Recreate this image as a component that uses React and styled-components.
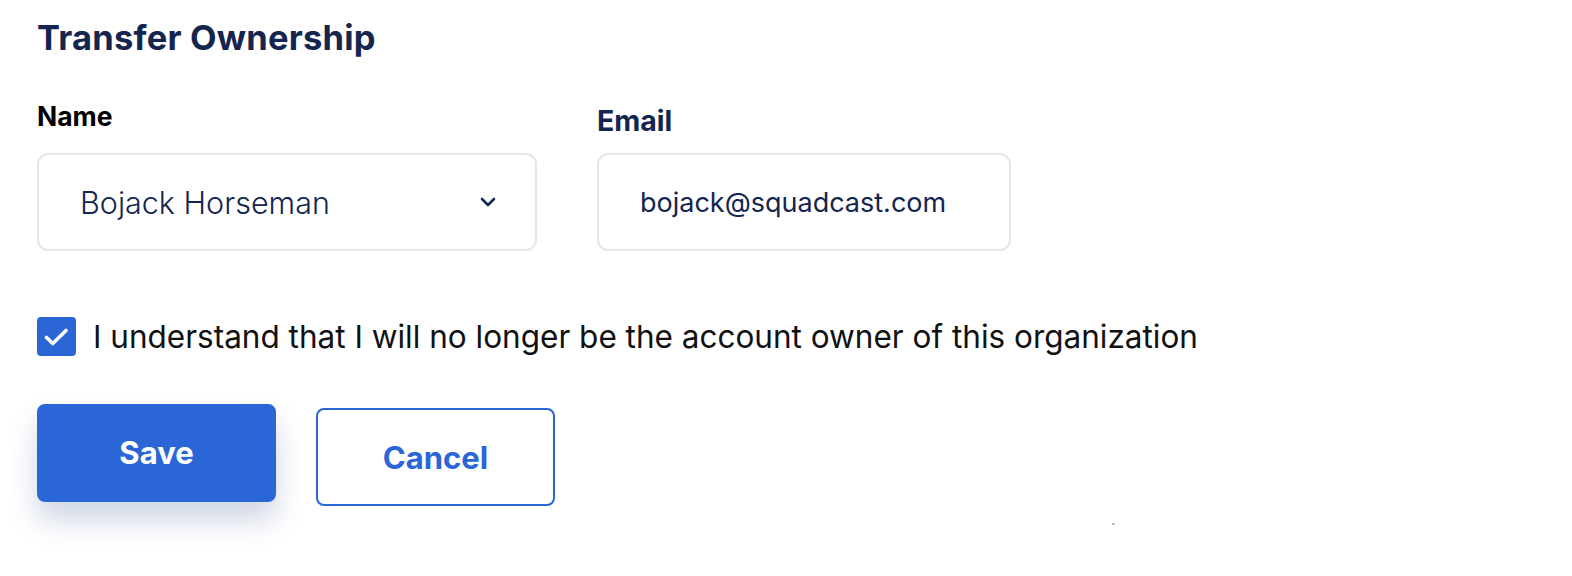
import React from "react";
import styled, { createGlobalStyle } from "styled-components";

const Global = createGlobalStyle`
  html, body { margin: 0; padding: 0; background: #ffffff; }
  body { font-family: Inter, "Noto Sans", sans-serif; -webkit-font-smoothing: antialiased; }
  * { box-sizing: border-box; }
`;

const Page = styled.div`
  position: relative;
  width: 1572px;
  height: 576px;
  padding: 18px 0 0 37px;
  display: flex;
  flex-direction: column;
`;

const Title = styled.h1`
  margin: 0;
  font-size: 34.5px;
  line-height: 40px;
  font-weight: 700;
  color: #14254f;
  letter-spacing: 0.2px;
`;

const Fields = styled.div`
  display: flex;
  gap: 60px;
  margin-top: 42px;
`;

const Field = styled.div`
  display: flex;
  flex-direction: column;
  width: ${(p) => p.$width}px;
`;

const Label = styled.label`
  display: block;
  height: 53px;
  padding-top: ${(p) => p.$offset}px;
  font-size: ${(p) => p.$size}px;
  line-height: 30px;
  font-weight: 700;
  color: ${(p) => p.$color};
`;

const Box = styled.div`
  height: 98px;
  border: 2px solid #e6e7eb;
  border-radius: 11px;
  display: flex;
  align-items: center;
  justify-content: space-between;
  padding: 0 39px 0 ${(p) => p.$padLeft}px;
  color: #14254f;
  font-size: ${(p) => p.$size}px;
  font-weight: ${(p) => p.$weight};
`;

const Check = styled.div`
  display: flex;
  align-items: center;
  gap: 17px;
  margin-top: 66px;
  font-size: 31.5px;
  line-height: 39px;
  color: #111111;
`;

const CheckBox = styled.span`
  flex: none;
  width: 39px;
  height: 39px;
  border-radius: 4px;
  background: #2a66d6;
  display: flex;
  align-items: center;
  justify-content: center;
`;

const Buttons = styled.div`
  display: flex;
  align-items: flex-start;
  gap: 40px;
  margin-top: 48px;
`;

const Button = styled.button`
  width: 239px;
  height: 98px;
  border-radius: 8px;
  font-family: Inter, "Noto Sans", sans-serif;
  font-size: 31px;
  font-weight: 700;
  cursor: pointer;
  border: 2px solid #2a66d6;
  background: ${(p) => (p.$primary ? "#2a66d6" : "#ffffff")};
  color: ${(p) => (p.$primary ? "#ffffff" : "#2a66d6")};
  box-shadow: ${(p) => (p.$primary ? "0 18px 28px rgba(42, 70, 140, 0.22)" : "none")};
  margin-top: ${(p) => (p.$primary ? 0 : 4)}px;
  padding: 0 0 ${(p) => (p.$primary ? 2 : 0)}px;
`;

const Speck = styled.span`
  position: absolute;
  left: 1112px;
  top: 523px;
  width: 3px;
  height: 2px;
  background: #b8bcc4;
`;

export default function App() {
  return (
    <Page>
      <Global />
      <Title>Transfer Ownership</Title>
      <Fields>
        <Field $width={500}>
          <Label $color="#000000" $size={26.5} $offset={1}>Name</Label>
          <Box $padLeft={41} $size={30.5} $weight={300}>
            <span>Bojack Horseman</span>
            <svg width="16" height="10" viewBox="0 0 16 10">
              <path d="M2 2 L8 8 L14 2" fill="none" stroke="#14254f" strokeWidth="2.6" strokeLinecap="round" strokeLinejoin="round" />
            </svg>
          </Box>
        </Field>
        <Field $width={414}>
          <Label $color="#14254f" $size={28.5} $offset={6}>Email</Label>
          <Box $padLeft={41} $size={27} $weight={400}>
            <span>bojack@squadcast.com</span>
          </Box>
        </Field>
      </Fields>
      <Check>
        <CheckBox>
          <svg width="25" height="20" viewBox="0 0 25 20">
            <path d="M2.5 10.5 L8.8 16.5 L22 3.5" fill="none" stroke="#ffffff" strokeWidth="3.6" strokeLinecap="round" strokeLinejoin="round" />
          </svg>
        </CheckBox>
        <span>I understand that I will no longer be the account owner of this organization</span>
      </Check>
      <Buttons>
        <Button $primary>Save</Button>
        <Button>Cancel</Button>
      </Buttons>
      <Speck />
    </Page>
  );
}
